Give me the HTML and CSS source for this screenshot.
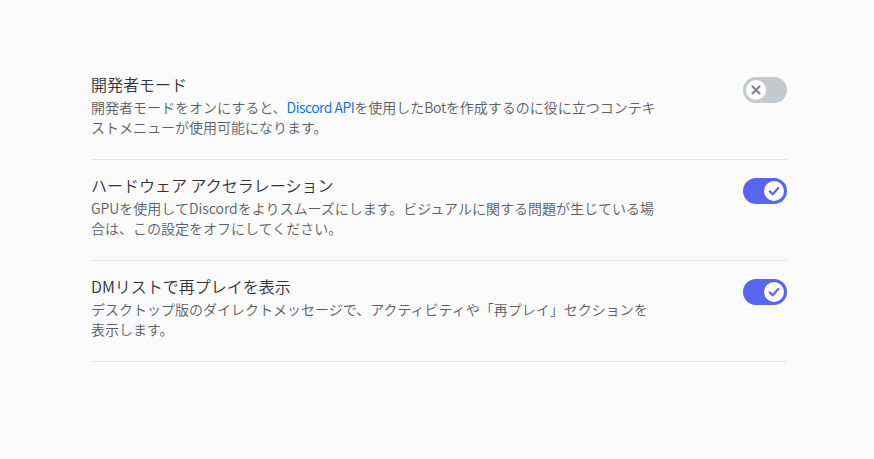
FILE: index.html
```html
<!DOCTYPE html>
<html lang="ja">
<head>
<meta charset="utf-8">
<link rel="stylesheet" href="styles.css">
</head>
<body>
<main class="page">
  <section class="setting">
    <div class="head">
      <h2 class="title">開発者モード</h2>
      <div class="toggle off" role="switch" aria-checked="false">
        <span class="knob">
          <svg viewBox="0 0 20 20" width="20" height="20"><path d="M6.5 6.5l7 7M13.5 6.5l-7 7" stroke="#80848e" stroke-width="2.2" stroke-linecap="round" fill="none"/></svg>
        </span>
      </div>
    </div>
    <p class="desc">開発者モードをオンにすると、<a class="link" href="#">Discord API</a>を使用した<span class="latin">Bot</span>を作成するのに役に立つコンテキストメニューが使用可能になります。</p>
  </section>
  <section class="setting">
    <div class="head">
      <h2 class="title">ハードウェア アクセラレーション</h2>
      <div class="toggle on" role="switch" aria-checked="true">
        <span class="knob">
          <svg viewBox="0 0 20 20" width="20" height="20"><path d="M5.8 10.4l2.9 2.9 5.6-6.2" stroke="#5865f2" stroke-width="2.2" stroke-linecap="round" stroke-linejoin="round" fill="none"/></svg>
        </span>
      </div>
    </div>
    <p class="desc">GPUを使用してDiscordをよりスムーズにします。ビジュアルに関する問題が生じている場合は、この設定をオフにしてください。</p>
  </section>
  <section class="setting">
    <div class="head">
      <h2 class="title">DMリストで再プレイを表示</h2>
      <div class="toggle on" role="switch" aria-checked="true">
        <span class="knob">
          <svg viewBox="0 0 20 20" width="20" height="20"><path d="M5.8 10.4l2.9 2.9 5.6-6.2" stroke="#5865f2" stroke-width="2.2" stroke-linecap="round" stroke-linejoin="round" fill="none"/></svg>
        </span>
      </div>
    </div>
    <p class="desc">デスクトップ版のダイレクトメッセージで、アクティビティや「再プレイ」セクションを表示します。</p>
  </section>
</main>
</body>
</html>
```
FILE: styles.css
```css
html, body {
  margin: 0;
  padding: 0;
  background: #fbfbfb;
}
body {
  font-family: "Noto Sans CJK JP", sans-serif;
  font-weight: 350;
}
.page {
  width: 696px;
  padding: 61px 0 0 91px;
}
.setting {
  border-bottom: 1px solid #e1e2e5;
  padding: 13px 0 22px;
}
.setting:first-child {
  padding-top: 11px;
}
.head {
  display: flex;
  justify-content: space-between;
  align-items: flex-start;
  height: 24px;
}
.title {
  margin: 0;
  font-size: 16px;
  font-weight: 350;
  line-height: 24px;
  color: #313338;
}
.toggle {
  width: 44px;
  height: 26px;
  border-radius: 13px;
  margin-top: 5px;
  box-sizing: border-box;
  padding: 3px;
  flex-shrink: 0;
}
.toggle.off { background: #c4c9ce; }
.toggle.on { background: #5865f2; }
.knob {
  display: flex;
  align-items: center;
  justify-content: center;
  width: 20px;
  height: 20px;
  border-radius: 50%;
  background: #ffffff;
}
.toggle.on .knob { margin-left: 18px; }
.desc {
  margin: 1px 0 0;
  max-width: 569px;
  font-size: 14px;
  line-height: 20px;
  color: #5c5e66;
}
.link {
  color: #006ce7;
  text-decoration: none;
  letter-spacing: -0.5px;
}
.latin {
  letter-spacing: -0.3px;
}
```
